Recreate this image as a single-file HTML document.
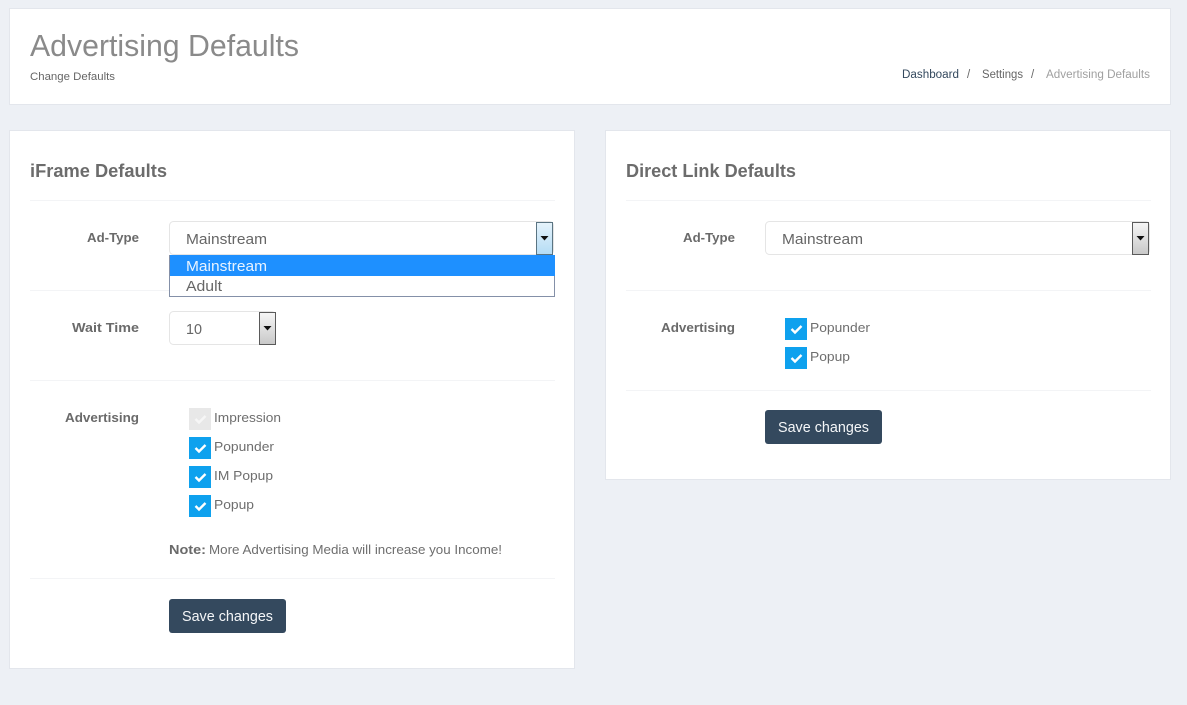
<!DOCTYPE html>
<html><head><meta charset="utf-8"><title>Advertising Defaults</title>
<style>
html,body{margin:0;padding:0;width:1187px;height:705px;overflow:hidden;background:#edf0f5}
svg{display:block;position:absolute;left:0;top:0}
text{font-family:"Liberation Sans",sans-serif;fill:#666}
.lb{font-size:13px;font-weight:bold;fill:#6a6a6a}
.ck{font-size:13px;fill:#6e6e6e}
.sel{font-size:15px;fill:#666}
.sv{font-size:15px;fill:#f4f6f8}
.h{font-size:18px;font-weight:bold;fill:#6c6c6c}
.bc{font-size:11.5px}
</style></head><body>
<svg width="1187" height="705" viewBox="0 0 1187 705">
<defs>
<linearGradient id="g" x1="0" y1="0" x2="0" y2="1"><stop offset="0" stop-color="#f6f6f6"/><stop offset="1" stop-color="#c8c8c8"/></linearGradient>
<linearGradient id="b" x1="0" y1="0" x2="0" y2="1"><stop offset="0" stop-color="#e6f3fb"/><stop offset="1" stop-color="#b4dcf5"/></linearGradient>
</defs>
<rect x="9.5" y="8.5" width="1161" height="96" fill="#fff" stroke="#e3e6ec"/>
<rect x="9.5" y="130.5" width="565" height="538" fill="#fff" stroke="#e3e6ec"/>
<rect x="605.5" y="130.5" width="565" height="349" fill="#fff" stroke="#e3e6ec"/>

<text x="30" y="56" font-size="31" style="fill:#8a8a8a" textLength="269" lengthAdjust="spacingAndGlyphs">Advertising Defaults</text>
<text x="30" y="80" font-size="11" textLength="85" lengthAdjust="spacingAndGlyphs">Change Defaults</text>
<text class="bc" x="902" y="78" style="fill:#34495e" textLength="57" lengthAdjust="spacingAndGlyphs">Dashboard</text>
<text class="bc" x="967" y="78">/</text>
<text class="bc" x="982" y="78" textLength="41" lengthAdjust="spacingAndGlyphs">Settings</text>
<text class="bc" x="1031" y="78">/</text>
<text class="bc" x="1046" y="78" style="fill:#a0a0a0" textLength="104" lengthAdjust="spacingAndGlyphs">Advertising Defaults</text>

<text class="h" x="30" y="177" textLength="137" lengthAdjust="spacingAndGlyphs">iFrame Defaults</text>
<text class="h" x="626" y="177" textLength="170" lengthAdjust="spacingAndGlyphs">Direct Link Defaults</text>

<g stroke="#f3f4f6" fill="none">
<path d="M30 200.5H555M30 290.5H555M30 380.5H555M30 578.5H555M626 200.5H1151M626 290.5H1151M626 390.5H1151"/>
</g>

<text class="lb" x="87" y="242" textLength="52" lengthAdjust="spacingAndGlyphs">Ad-Type</text>
<text class="lb" x="72" y="332" textLength="67" lengthAdjust="spacingAndGlyphs">Wait Time</text>
<text class="lb" x="65" y="422" textLength="74" lengthAdjust="spacingAndGlyphs">Advertising</text>
<text class="lb" x="683" y="242" textLength="52" lengthAdjust="spacingAndGlyphs">Ad-Type</text>
<text class="lb" x="661" y="332" textLength="74" lengthAdjust="spacingAndGlyphs">Advertising</text>

<!-- left select -->
<rect x="169.5" y="221.5" width="384" height="33" rx="4" fill="#fff" stroke="#e5e5e5"/>
<text class="sel" x="186" y="244" textLength="81" lengthAdjust="spacingAndGlyphs">Mainstream</text>
<rect x="536.5" y="222.5" width="16" height="32" fill="url(#b)" stroke="#5a7482"/>
<path d="M540.500 236h8l-4 4.500z" fill="#111"/>
<!-- dropdown -->
<rect x="169.500" y="255.500" width="385" height="41" fill="#fff" stroke="#8490a8"/>
<rect x="170" y="255" width="385" height="21" fill="#1e90ff"/>
<text class="sel" x="186" y="271" style="fill:#e8f3ff" textLength="81" lengthAdjust="spacingAndGlyphs">Mainstream</text>
<text class="sel" x="186" y="291" textLength="36" lengthAdjust="spacingAndGlyphs">Adult</text>

<!-- wait select -->
<rect x="169.500" y="311.500" width="106" height="33" rx="4" fill="#fff" stroke="#e5e5e5"/>
<text class="sel" x="186" y="334" textLength="16" lengthAdjust="spacingAndGlyphs">10</text>
<rect x="259.500" y="312.500" width="16" height="32" fill="url(#g)" stroke="#5a5a5a"/>
<path d="M263.500 326h8l-4 4.500z" fill="#111"/>

<!-- right select -->
<rect x="765.500" y="221.500" width="384" height="33" rx="4" fill="#fff" stroke="#e5e5e5"/>
<text class="sel" x="782" y="244" textLength="81" lengthAdjust="spacingAndGlyphs">Mainstream</text>
<rect x="1132.500" y="222.500" width="16" height="32" fill="url(#g)" stroke="#5a5a5a"/>
<path d="M1136.500 236h8l-4 4.500z" fill="#111"/>

<!-- left checks -->
<rect x="189" y="408" width="22" height="22" fill="#e8e8e8"/>
<path d="M195.500 419l3.500 3.500l6.500-6.500" fill="none" stroke="#f6f6f6" stroke-width="2.400"/>
<text class="ck" x="214" y="422" textLength="67" lengthAdjust="spacingAndGlyphs">Impression</text>
<rect x="189" y="437" width="22" height="22" fill="#0ea1ee"/>
<path d="M195.500 448l3.500 3.500l6.500-6.500" fill="none" stroke="#fff" stroke-width="2.400"/>
<text class="ck" x="214" y="451" textLength="60" lengthAdjust="spacingAndGlyphs">Popunder</text>
<rect x="189" y="466" width="22" height="22" fill="#0ea1ee"/>
<path d="M195.500 477l3.500 3.500l6.500-6.500" fill="none" stroke="#fff" stroke-width="2.400"/>
<text class="ck" x="214" y="480" textLength="59" lengthAdjust="spacingAndGlyphs">IM Popup</text>
<rect x="189" y="495" width="22" height="22" fill="#0ea1ee"/>
<path d="M195.500 506l3.500 3.500l6.500-6.500" fill="none" stroke="#fff" stroke-width="2.400"/>
<text class="ck" x="214" y="509" textLength="40" lengthAdjust="spacingAndGlyphs">Popup</text>

<text class="lb" x="169" y="554" textLength="37" lengthAdjust="spacingAndGlyphs">Note:</text>
<text class="ck" x="209" y="554" textLength="293" lengthAdjust="spacingAndGlyphs">More Advertising Media will increase you Income!</text>

<!-- right checks -->
<rect x="785" y="318" width="22" height="22" fill="#0ea1ee"/>
<path d="M791.500 329l3.500 3.500l6.500-6.500" fill="none" stroke="#fff" stroke-width="2.400"/>
<text class="ck" x="810" y="332" textLength="60" lengthAdjust="spacingAndGlyphs">Popunder</text>
<rect x="785" y="347" width="22" height="22" fill="#0ea1ee"/>
<path d="M791.500 358l3.500 3.500l6.500-6.500" fill="none" stroke="#fff" stroke-width="2.400"/>
<text class="ck" x="810" y="361" textLength="40" lengthAdjust="spacingAndGlyphs">Popup</text>

<!-- buttons -->
<rect x="169" y="599" width="117" height="34" rx="3" fill="#34495e"/>
<text class="sv" x="182" y="621" textLength="91" lengthAdjust="spacingAndGlyphs">Save changes</text>
<rect x="765" y="410" width="117" height="34" rx="3" fill="#34495e"/>
<text class="sv" x="778" y="432" textLength="91" lengthAdjust="spacingAndGlyphs">Save changes</text>
</svg>
</body></html>
